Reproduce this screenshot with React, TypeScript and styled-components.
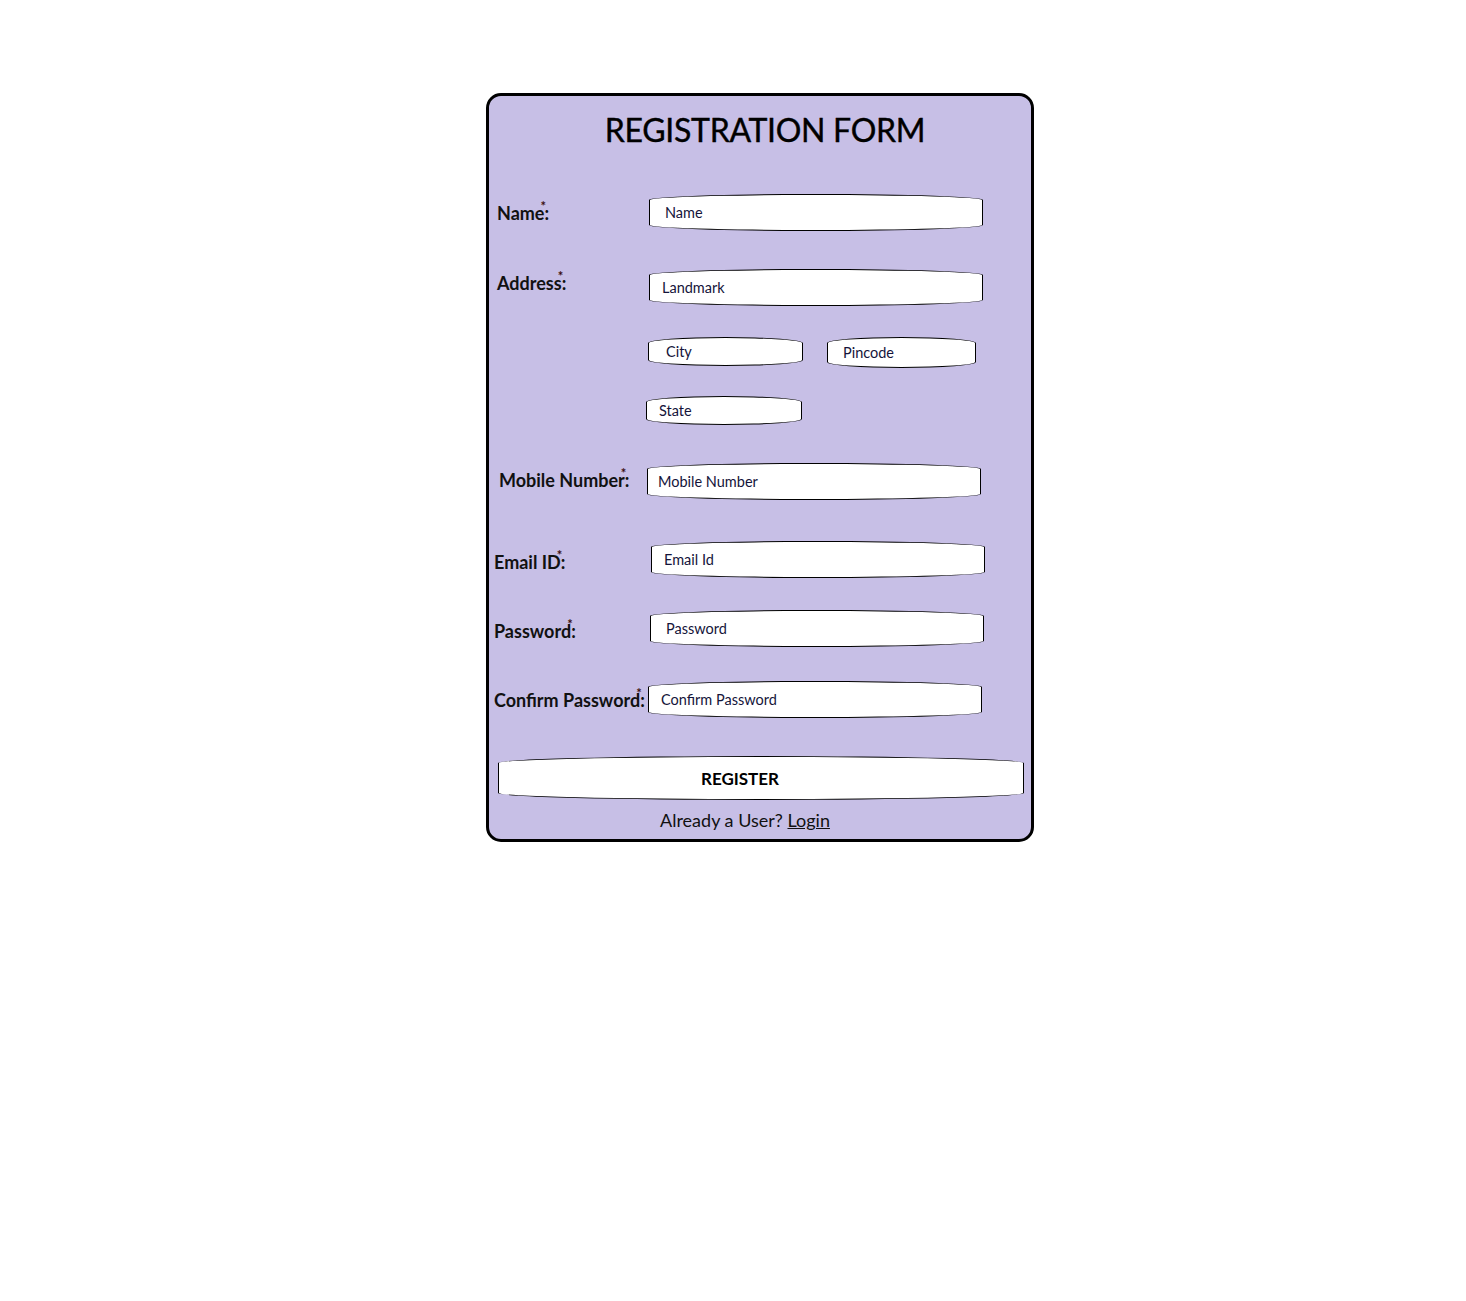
import React from 'react';
import styled, { createGlobalStyle } from 'styled-components';

const GlobalStyle = createGlobalStyle`
        body {
            margin: 0;
            background: #ffffff;
            font-family: Lato, "Open Sans", sans-serif;
            color: #111111;
        }
`

const Page = styled.div`
        padding: 93px 0 0 486px;
        height: 1301px;
        box-sizing: border-box;
`

const Card = styled.form`
        width: 548px;
        height: 749px;
        box-sizing: border-box;
        border: 3px solid #000000;
        border-radius: 15px;
        background: #c7bfe6;
        display: flex;
        flex-direction: column;
`

const Title = styled.h1`
        margin: 14px 0 0 0;
        text-align: center;
        font-size: 32px;
        line-height: 40px;
        font-weight: 400;
        letter-spacing: -0.3px;
        -webkit-text-stroke: 0.4px #000000;
        padding-left: 10px;
        color: #000000;
`

const Row = styled.div<{ $top: number }>`
        display: grid;
        grid-template-columns: 156px 1fr;
        align-items: center;
        margin-top: ${p => p.$top}px;
        padding-left: 4px;
`

const Label = styled.label<{ $x?: number; $dy?: number }>`
        font-size: 18px;
        line-height: 22px;
        font-weight: 700;
        white-space: nowrap;
        padding-left: ${p => p.$x || 0}px;
        margin-top: ${p => (p.$dy || 0) * 2}px;
        color: #111111;
`

const Star = styled.span`
        display: inline-block;
        width: 0;
        font-size: 13px;
        line-height: 0;
        vertical-align: 9px;
        font-weight: 700;
        color: #3a0d0d;
        transform: translateX(-4px);
`

const Field = styled.input<{ $w: number; $h: number; $x?: number }>`
        display: block;
        width: ${p => p.$w}px;
        height: ${p => p.$h}px;
        margin-left: ${p => p.$x || 0}px;
        box-sizing: border-box;
        border: 1px solid #000000;
        border-radius: 50% / 6px;
        background: #ffffff;
        padding: 0 12px 0 15px;
        font-family: Lato, "Open Sans", sans-serif;
        font-size: 14.5px;
        outline: none;
        &::placeholder {
            color: #14143a;
            opacity: 1;
        }
`

const Pair = styled.div`
        display: flex;
        gap: 24px;
        align-items: flex-start;
`

const Button = styled.button`
        display: block;
        margin: 38px 0 0 9px;
        width: 526px;
        height: 44px;
        box-sizing: border-box;
        border: 1px solid #000000;
        border-radius: 50% / 7px;
        background: #ffffff;
        font-family: Lato, "Open Sans", sans-serif;
        font-size: 17px;
        font-weight: 700;
        color: #000000;
        padding: 0 42px 0 0;
        cursor: pointer;
`

const Footer = styled.p`
        margin: 8px 0 0 0;
        text-align: center;
        font-size: 18px;
        line-height: 24px;
        padding-right: 30px;
        color: #111111;
        a {
            color: #111111;
            text-decoration: underline;
        }
`

const Req: React.FC<{ text: string }> = ({ text }) => (
    <>
        {text}<Star>*</Star>:
    </>
);

const App: React.FC = () => {
    return <Page>
        <GlobalStyle />
        <Card onSubmit={e => e.preventDefault()}>
            <Title>REGISTRATION FORM</Title>
            <Row $top={44}>
                <Label $x={4}><Req text="Name" /></Label>
                <Field $w={334} $h={37} placeholder="Name" />
            </Row>
            <Row $top={38}>
                <Label $x={4} $dy={-5}><Req text="Address" /></Label>
                <Field $w={334} $h={37} placeholder="Landmark" style={{ paddingLeft: 12 }} />
            </Row>
            <Row $top={31}>
                <span />
                <Pair>
                    <Field $w={155} $h={29} $x={-1} placeholder="City" style={{ paddingLeft: 17 }} />
                    <Field $w={149} $h={31} placeholder="Pincode" />
                </Pair>
            </Row>
            <Row $top={28}>
                <span />
                <Field $w={156} $h={29} $x={-3} placeholder="State" style={{ paddingLeft: 12 }} />
            </Row>
            <Row $top={38}>
                <Label $x={6} $dy={-2}><Req text="Mobile Number" /></Label>
                <Field $w={334} $h={37} $x={-2} placeholder="Mobile Number" style={{ paddingLeft: 10 }} />
            </Row>
            <Row $top={41}>
                <Label $x={1} $dy={2}><Req text="Email ID" /></Label>
                <Field $w={334} $h={37} $x={2} placeholder="Email Id" style={{ paddingLeft: 12 }} />
            </Row>
            <Row $top={32}>
                <Label $x={1} $dy={2}><Req text="Password" /></Label>
                <Field $w={334} $h={37} $x={1} placeholder="Password" type="password" />
            </Row>
            <Row $top={34}>
                <Label $x={1}><Req text="Confirm Password" /></Label>
                <Field $w={334} $h={37} $x={-1} placeholder="Confirm Password" type="password" style={{ paddingLeft: 12 }} />
            </Row>
            <Button type="submit">REGISTER</Button>
            <Footer>Already a User? <a href="#">Login</a></Footer>
        </Card>
    </Page>
};

export default App;
